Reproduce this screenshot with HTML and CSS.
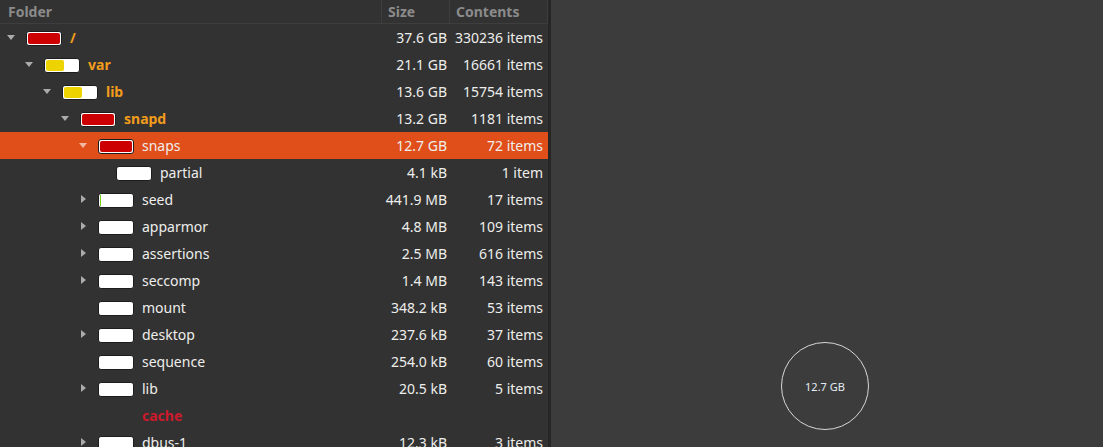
FILE: index.html
```html
<!DOCTYPE html>
<html>
<head>
<meta charset="utf-8">
<link rel="stylesheet" href="styles.css">
</head>
<body>
<div class="app">
  <div class="tree">
    <div class="head">
      <div class="hcell hname">Folder</div>
      <div class="hcell">Size</div>
      <div class="hcell">Contents</div>
    </div>
    <div class="rows">
      <div class="row">
        <div class="name" style="padding-left:0px"><span class="exp down"></span><span class="bar"><span class="fill red" style="width:100%"></span></span><span class="label big">/</span></div>
        <div class="size">37.6 GB</div><div class="cont">330236 items</div>
      </div>
      <div class="row">
        <div class="name" style="padding-left:18px"><span class="exp down"></span><span class="bar"><span class="fill yellow" style="width:56%"></span></span><span class="label big">var</span></div>
        <div class="size">21.1 GB</div><div class="cont">16661 items</div>
      </div>
      <div class="row">
        <div class="name" style="padding-left:36px"><span class="exp down"></span><span class="bar"><span class="fill yellow" style="width:56%"></span></span><span class="label big">lib</span></div>
        <div class="size">13.6 GB</div><div class="cont">15754 items</div>
      </div>
      <div class="row">
        <div class="name" style="padding-left:54px"><span class="exp down"></span><span class="bar"><span class="fill red" style="width:100%"></span></span><span class="label big">snapd</span></div>
        <div class="size">13.2 GB</div><div class="cont">1181 items</div>
      </div>
      <div class="row selected">
        <div class="name" style="padding-left:72px"><span class="exp down"></span><span class="bar"><span class="fill red" style="width:100%"></span></span><span class="label">snaps</span></div>
        <div class="size">12.7 GB</div><div class="cont">72 items</div>
      </div>
      <div class="row">
        <div class="name" style="padding-left:90px"><span class="exp"></span><span class="bar"></span><span class="label">partial</span></div>
        <div class="size">4.1 kB</div><div class="cont">1 item</div>
      </div>
      <div class="row">
        <div class="name" style="padding-left:72px"><span class="exp right"></span><span class="bar"><span class="fill green" style="width:1px"></span></span><span class="label">seed</span></div>
        <div class="size">441.9 MB</div><div class="cont">17 items</div>
      </div>
      <div class="row">
        <div class="name" style="padding-left:72px"><span class="exp right"></span><span class="bar"></span><span class="label">apparmor</span></div>
        <div class="size">4.8 MB</div><div class="cont">109 items</div>
      </div>
      <div class="row">
        <div class="name" style="padding-left:72px"><span class="exp right"></span><span class="bar"></span><span class="label">assertions</span></div>
        <div class="size">2.5 MB</div><div class="cont">616 items</div>
      </div>
      <div class="row">
        <div class="name" style="padding-left:72px"><span class="exp right"></span><span class="bar"></span><span class="label">seccomp</span></div>
        <div class="size">1.4 MB</div><div class="cont">143 items</div>
      </div>
      <div class="row">
        <div class="name" style="padding-left:72px"><span class="exp"></span><span class="bar"></span><span class="label">mount</span></div>
        <div class="size">348.2 kB</div><div class="cont">53 items</div>
      </div>
      <div class="row">
        <div class="name" style="padding-left:72px"><span class="exp right"></span><span class="bar"></span><span class="label">desktop</span></div>
        <div class="size">237.6 kB</div><div class="cont">37 items</div>
      </div>
      <div class="row">
        <div class="name" style="padding-left:72px"><span class="exp"></span><span class="bar"></span><span class="label">sequence</span></div>
        <div class="size">254.0 kB</div><div class="cont">60 items</div>
      </div>
      <div class="row">
        <div class="name" style="padding-left:72px"><span class="exp right"></span><span class="bar"></span><span class="label">lib</span></div>
        <div class="size">20.5 kB</div><div class="cont">5 items</div>
      </div>
      <div class="row">
        <div class="name" style="padding-left:72px"><span class="exp"></span><span class="bar nobar"></span><span class="label error">cache</span></div>
        <div class="size"></div><div class="cont"></div>
      </div>
      <div class="row">
        <div class="name" style="padding-left:72px"><span class="exp right"></span><span class="bar"></span><span class="label">dbus-1</span></div>
        <div class="size">12.3 kB</div><div class="cont">3 items</div>
      </div>
    </div>
  </div>
  <div class="divider"></div>
  <div class="chart">
    <div class="ring">12.7 GB</div>
  </div>
</div>
</body>
</html>
```

FILE: styles.css
```css
html, body {
  margin: 0;
  padding: 0;
  width: 1103px;
  height: 447px;
  overflow: hidden;
  background: #3c3c3c;
  font-family: "Noto Sans", "DejaVu Sans", sans-serif;
  font-size: 14px;
  color: #eeeeec;
}
.app {
  display: flex;
  width: 1103px;
  height: 447px;
}
.tree {
  width: 548px;
  flex: none;
  background: #323232;
  overflow: hidden;
}
.divider {
  width: 3px;
  flex: none;
  background: #262626;
}
.chart {
  flex: 1;
  background: #3c3c3c;
  position: relative;
}
.head {
  display: grid;
  grid-template-columns: 382px 68px 98px;
  height: 23px;
  border-bottom: 1px solid #3e3e3e;
}
.hcell {
  font-weight: bold;
  color: #8b8b8b;
  font-size: 14px;
  line-height: 23px;
  padding-left: 6px;
  border-right: 1px solid #3e3e3e;
}
.hcell.hname { padding-left: 8px; }
.rows {
  display: flex;
  flex-direction: column;
}
.row {
  display: grid;
  grid-template-columns: 382px 68px 98px;
  height: 27px;
  align-items: center;
}
.row.selected {
  background: #e04e1a;
}
.name {
  display: flex;
  align-items: center;
  height: 27px;
  margin-left: 7px;
}
.exp {
  width: 19px;
  height: 27px;
  flex: none;
  position: relative;
}
.exp.down::before {
  content: "";
  position: absolute;
  left: 0px;
  top: 11px;
  border-left: 4.5px solid transparent;
  border-right: 4.5px solid transparent;
  border-top: 5px solid #ababab;
}
.selected .exp.down::before { border-top-color: #f3b9a2; }
.exp.right::before {
  content: "";
  position: absolute;
  left: 2px;
  top: 9px;
  border-top: 4.5px solid transparent;
  border-bottom: 4.5px solid transparent;
  border-left: 5px solid #ababab;
}
.bar {
  width: 32px;
  height: 11px;
  flex: none;
  background: #ffffff;
  border: 1px solid #1c1c1c;
  border-radius: 3px;
  padding: 1px;
  box-sizing: content-box;
  display: flex;
  margin-top: 1px;
}
.bar .fill {
  height: 11px;
  border-radius: 2px;
}
.fill.red { background: #cc0000; }
.fill.yellow { background: #edd400; }
.fill.green { background: #73d216; border-radius: 0; }
.bar.nobar { visibility: hidden; }
.label {
  margin-left: 8px;
  white-space: nowrap;
  color: #eeeeec;
}
.label.big {
  font-weight: bold;
  color: #f39c1c;
}
.label.error {
  font-weight: bold;
  color: #cc1a2c;
}
.size, .cont {
  text-align: right;
  white-space: nowrap;
  padding-right: 3px;
}
.cont { padding-right: 5px; }
.ring {
  position: absolute;
  left: 230px;
  top: 342px;
  width: 86px;
  height: 86px;
  border: 1.5px solid #d8d8d8;
  border-radius: 50%;
  display: flex;
  align-items: center;
  justify-content: center;
  font-size: 11px;
  color: #e4ecf4;
}
```
